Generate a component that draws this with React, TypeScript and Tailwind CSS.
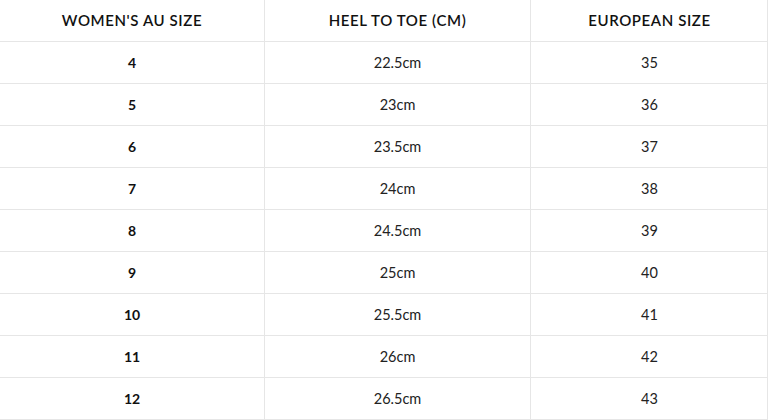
const rows: [string, string, string][] = [
  ["4", "22.5cm", "35"],
  ["5", "23cm", "36"],
  ["6", "23.5cm", "37"],
  ["7", "24cm", "38"],
  ["8", "24.5cm", "39"],
  ["9", "25cm", "40"],
  ["10", "25.5cm", "41"],
  ["11", "26cm", "42"],
  ["12", "26.5cm", "43"],
];

function Row({
  cells,
  header = false,
}: {
  cells: [string, string, string];
  header?: boolean;
}) {
  return (
    <div className="grid grid-cols-[265px_266px_237px] border-b border-[#e6e6e6]">
      {cells.map((c, i) => (
        <div
          key={i}
          className={
            "flex h-[41px] items-center justify-center border-[#e6e6e6] " +
            (i < 2 ? "border-r " : "") +
            (header
              ? "text-[15px] font-semibold uppercase tracking-[0.04em] text-[#111]"
              : i === 0
                ? "text-[14px] font-bold text-[#111]"
                : "text-[14.5px] font-normal text-[#222]")
          }
        >
          {c}
        </div>
      ))}
    </div>
  );
}

export default function App() {
  return (
    <div
      className="h-[420px] w-[769px] overflow-hidden bg-white"
      style={{ fontFamily: "Lato, 'Noto Sans', sans-serif" }}
    >
      <div className="w-[768px] border-r border-[#e6e6e6]">
        <Row cells={["Women's AU Size", "Heel to Toe (cm)", "European Size"]} header />
        {rows.map((r) => (
          <Row key={r[0]} cells={r} />
        ))}
      </div>
    </div>
  );
}
